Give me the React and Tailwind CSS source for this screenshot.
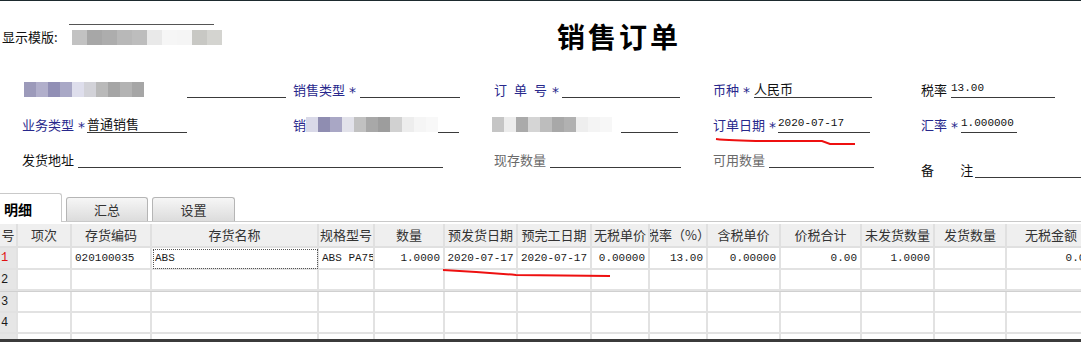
import React from "react";

const cjk = { fontFamily: '"Noto Sans CJK SC", "Noto Sans", sans-serif' };
const mono = { fontFamily: '"Liberation Mono", "Noto Sans CJK SC", monospace' };

const Mosaic = ({ colors, w = 12, h = 15, className = "" }) => (
    <div className={`flex ${className}`}>
        {colors.map((c, i) => (
            <div key={i} style={{ background: c, width: w, height: h }} />
        ))}
    </div>
);

const Blue = ({ children, className = "" }) => (
    <span className={`text-[13px] leading-[17px] text-[#28288c] whitespace-nowrap ${className}`}>{children}</span>
);

const Star = ({ className = "mx-[4px]" }) => (
    <span
        className={`text-[14px] leading-[17px] text-[#28288c] translate-y-[3px] ${className}`}
        style={{ fontFamily: '"DejaVu Sans", sans-serif' }}
    >
        *
    </span>
);

const Field = ({ w, children, className = "", textStyle = mono }) => (
    <div
        className={`h-[18px] border-b border-[#3a3a3a] overflow-hidden whitespace-nowrap text-[11px] leading-[17px] text-[#111] ${className}`}
        style={{ width: w, ...textStyle }}
    >
        {children}
    </div>
);

const cols = "grid grid-cols-[18px_54px_80px_167px_56px_70px_73px_74px_58px_58px_73px_81px_73px_72px_90px]";

const headers = ["号", "项次", "存货编码", "存货名称", "规格型号", "数量", "预发货日期", "预完工日期", "无税单价", "税率（%）", "含税单价", "价税合计", "未发货数量", "发货数量", "无税金额"];

const row1 = [
    { v: "1", red: true },
    { v: "" },
    { v: "020100035", left: true },
    { v: "ABS", left: true, focus: true },
    { v: "ABS PA757", left: true },
    { v: "1.0000" },
    { v: "2020-07-17", center: true },
    { v: "2020-07-17", center: true },
    { v: "0.00000" },
    { v: "13.00" },
    { v: "0.00000" },
    { v: "0.00" },
    { v: "1.0000" },
    { v: "" },
    { v: "0.00" },
];

const DataRow = ({ cells, h = "h-[22px]", extra = "" }) => (
    <div className={`${cols} ${h} ${extra}`}>
        {cells.map((c, i) => (
            <div
                key={i}
                className={`overflow-hidden whitespace-nowrap border-r-2 border-b-2 border-[#e2e2e2] flex items-center text-[11px] text-[#1a1a1a] ${
                    i === 0 ? "bg-[#e6e6e6] justify-start pl-[1px] text-[12px]" : "bg-white"
                } ${c.left ? "justify-start pl-[3px]" : c.center ? "justify-center" : i === 0 ? "" : "justify-end pr-[3px]"} ${
                    c.focus ? "outline outline-1 outline-dotted outline-[#555] -outline-offset-2" : ""
                } ${c.red ? "text-[#e01010]" : ""}`}
                style={mono}
            >
                {c.v}
            </div>
        ))}
    </div>
);

const blankRow = (n) => headers.map((_, i) => ({ v: i === 0 ? n : "" }));

export default function App() {
    return (
        <div className="relative w-[1081px] h-[342px] overflow-hidden bg-white flex flex-col" style={cjk}>
            <div className="h-px bg-[#1d2a2e] shrink-0" />

            {/* header */}
            <div className="h-[62px] shrink-0 flex items-start">
                <div className="w-[557px] flex items-center pt-[28px] pl-[2px]">
                    <span className="text-[13px] leading-[16px] text-[#111]">显示模版:</span>
                    <div className="relative ml-[14px]">
                        <div className="absolute -top-[6px] -left-[3px] w-[145px] h-px bg-[#555]" />
                        <Mosaic
                            w={15}
                            h={15}
                            colors={["#c2c2c2", "#a7a7a7", "#adadad", "#b8b8b8", "#bdbdbd", "#e9e9e9", "#f6f6f6", "#f5f5f5", "#c8c8c4", "#d4d4d0"]}
                        />
                    </div>
                </div>
                <h1 className="text-[28px] leading-[30px] font-bold tracking-[3px] text-black pt-[20px]">销售订单</h1>
            </div>

            {/* form */}
            <div className="shrink-0 pl-[22px]">
                <div className="grid grid-cols-[271px_201px_219px_208px_160px] h-[35px] items-end">
                    <div className="flex items-end">
                        <Mosaic
                            className="ml-[2px] mb-[1px]"
                            colors={["#9c9aba", "#b1afcb", "#918fb5", "#a9a8c6", "#dedeec", "#d2d2d8", "#b9b9b9", "#a5a5a5", "#b3b3b3", "#a6a6a6"]}
                        />
                        <Field w={99} className="ml-[43px]" />
                    </div>
                    <div className="flex items-end">
                        <Blue>销售类型</Blue>
                        <Star />
                        <Field w={100} />
                    </div>
                    <div className="flex items-end">
                        <Blue className="tracking-[7px]">订单号</Blue>
                        <Star className="-ml-[2px] mr-[3px]" />
                        <Field w={118} />
                    </div>
                    <div className="flex items-end">
                        <Blue>币种</Blue>
                        <Star />
                        <Field w={118} textStyle={cjk} className="text-[13px]">人民币</Field>
                    </div>
                    <div className="flex items-end">
                        <span className="text-[13px] leading-[17px] text-[#111]">税率</span>
                        <Field w={104} className="ml-[4px]">13.00</Field>
                    </div>
                </div>

                <div className="grid grid-cols-[271px_201px_219px_208px_160px] h-[35px] items-end">
                    <div className="flex items-end">
                        <Blue>业务类型</Blue>
                        <Star />
                        <Field w={100} textStyle={cjk} className="text-[13px] -ml-[2px]">普通销售</Field>
                    </div>
                    <div className="flex items-end">
                        <Blue>销</Blue>
                        <Mosaic
                            className="mb-[1px]"
                            colors={["#d9d9e8", "#8f8db1", "#a9a7c5", "#e2e2ea", "#c1c1c1", "#a8a8a8", "#9d9d9d", "#d1d1d1", "#ededed", "#f5f5f5", "#f8f8f8"]}
                        />
                        <Field w={21} />
                    </div>
                    <div className="flex items-end">
                        <Mosaic
                            className="-ml-[2px] mb-[1px]"
                            colors={["#c5c5c5", "#ececec", "#aaaaaa", "#d5d5d5", "#bdbdbd", "#a8a8a8", "#b1b1b1", "#eeeeee", "#f4f4f4", "#f7f7f7"]}
                        />
                        <Field w={57} className="ml-[9px]" />
                    </div>
                    <div className="flex items-end">
                        <Blue>订单日期</Blue>
                        <Star />
                        <Field w={92} className="-ml-[2px]">2020-07-17</Field>
                    </div>
                    <div className="flex items-end">
                        <Blue>汇率</Blue>
                        <Star />
                        <Field w={56} className="-ml-[1px]">1.000000</Field>
                    </div>
                </div>

                <div className="grid grid-cols-[472px_219px_208px_160px] h-[35px] items-end">
                    <div className="flex items-end">
                        <span className="text-[13px] leading-[17px] text-[#111]">发货地址</span>
                        <Field w={365} className="ml-[4px]" />
                    </div>
                    <div className="flex items-end">
                        <span className="text-[13px] leading-[17px] text-[#6a6a6a]">现存数量</span>
                        <Field w={131} className="ml-[4px]" />
                    </div>
                    <div className="flex items-end">
                        <span className="text-[13px] leading-[17px] text-[#6a6a6a]">可用数量</span>
                        <Field w={105} className="ml-[4px]" />
                    </div>
                    <div className="flex items-end translate-y-[10px]">
                        <span className="text-[13px] leading-[17px] text-[#111] w-[41px]">备</span>
                        <span className="text-[13px] leading-[17px] text-[#111]">注</span>
                        <Field w={110} className="ml-[2px]" />
                    </div>
                </div>
            </div>

            {/* tabs */}
            <div className="shrink-0 mt-[25px] h-[29px] flex items-end border-b border-[#c9c9c9]">
                <div className="h-[29px] w-[62px] -mb-px bg-white border-t border-r border-[#c9c9c9] rounded-tr-[3px] flex items-center pl-[4px] pt-[2px]">
                    <span className="text-[14px] font-bold text-black">明细</span>
                </div>
                <div className="ml-[4px] h-[24px] w-[82px] rounded-t-[3px] border border-b-0 border-[#b5b5b5] bg-gradient-to-b from-[#f6f6f6] to-[#dcdcdc] flex items-center justify-center">
                    <span className="text-[13px] text-[#333]">汇总</span>
                </div>
                <div className="ml-[4px] h-[24px] w-[83px] rounded-t-[3px] border border-b-0 border-[#b5b5b5] bg-gradient-to-b from-[#f6f6f6] to-[#dcdcdc] flex items-center justify-center">
                    <span className="text-[13px] text-[#333]">设置</span>
                </div>
            </div>

            {/* table */}
            <div className="flex-1 overflow-hidden pt-[2px]">
                <div className={`${cols} h-[24px] bg-[#efefef]`}>
                    {headers.map((h, i) => (
                        <div
                            key={i}
                            className="overflow-hidden whitespace-nowrap border-r-2 border-b-2 border-[#e0e0e0] flex items-center justify-center text-[13px] text-[#333]"
                        >
                            {h}
                        </div>
                    ))}
                </div>
                <DataRow cells={row1} />
                <DataRow cells={blankRow("2")} h="h-[22px]" extra="border-b border-[#d0d0d0]" />
                <DataRow cells={blankRow("3")} h="h-[21px]" />
                <DataRow cells={blankRow("4")} h="h-[21px]" />
                <DataRow cells={blankRow("")} h="h-[21px]" />
            </div>

            <div className="h-[3px] shrink-0 bg-[#3b3b3b]" />

            {/* red annotations */}
            <svg className="absolute inset-0 pointer-events-none" width="1081" height="342">
                <path d="M716 139 C 740 142, 780 141, 822 141 L 830 144 L 855 144" fill="none" stroke="#ee1010" strokeWidth="2" />
                <path d="M443 270 Q 480 272 516 275 L 610 276" fill="none" stroke="#ee1010" strokeWidth="2" />
            </svg>
        </div>
    );
}
